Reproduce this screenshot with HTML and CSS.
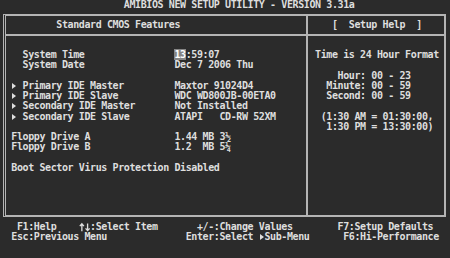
FILE: index.html
```html
<!DOCTYPE html>
<html lang="en">
<head>
  <meta charset="UTF-8" />
  <meta name="viewport" content="width=device-width, initial-scale=1" />
  <title>AMIBIOS Setup</title>
  <link rel="stylesheet" href="styles.css">
</head>
<body>
  <div class="screen">
    <div class="title">AMIBIOS NEW SETUP UTILITY - VERSION 3.31a</div>

    <div class="frame">
      <!-- Main settings pane -->
      <div class="pane main">
        <div class="head">Standard CMOS Features</div>
        <div class="body">
          <div class="group">
            <div class="item"><span></span><span class="label">System Time</span><span class="value"><span class="cursor">13</span>:59:07</span></div>
            <div class="item"><span></span><span class="label">System Date</span><span class="value">Dec 7 2006 Thu</span></div>
          </div>
          <div class="group">
            <div class="item"><span class="arrow"><i class="tri"></i></span><span class="label">Primary IDE Master</span><span class="value">Maxtor 91024D4</span></div>
            <div class="item"><span class="arrow"><i class="tri"></i></span><span class="label">Primary IDE Slave</span><span class="value">WDC WD800JB-00ETA0</span></div>
            <div class="item"><span class="arrow"><i class="tri"></i></span><span class="label">Secondary IDE Master</span><span class="value">Not Installed</span></div>
            <div class="item"><span class="arrow"><i class="tri"></i></span><span class="label">Secondary IDE Slave</span><span class="value">ATAPI   CD-RW 52XM</span></div>
          </div>
          <div class="group">
            <div class="item wide"><span class="label">Floppy Drive A</span><span class="value">1.44 MB 3½</span></div>
            <div class="item wide"><span class="label">Floppy Drive B</span><span class="value">1.2  MB 5¼</span></div>
          </div>
          <div class="group">
            <div class="item wide"><span class="label">Boot Sector Virus Protection</span><span class="value">Disabled</span></div>
          </div>
        </div>
      </div>

      <!-- Help pane -->
      <div class="pane help">
        <div class="head">[  Setup Help  ]</div>
        <div class="body">
          <div class="group">
            <div class="line">Time is 24 Hour Format</div>
          </div>
          <div class="group">
            <div class="line">    Hour: 00 - 23</div>
            <div class="line">  Minute: 00 - 59</div>
            <div class="line">  Second: 00 - 59</div>
          </div>
          <div class="group">
            <div class="line"> (1:30 AM = 01:30:00,</div>
            <div class="line">  1:30 PM = 13:30:00)</div>
          </div>
        </div>
      </div>
    </div>

    <div class="keys">
      <div class="line"> F1:Help    <svg class="ud" viewBox="0 0 11 10" width="11" height="10" aria-label="up down"><path d="M2.8 2v7M0.8 4l2-2.2 2 2.2M8.4 1.5v6.8M6.4 6.2l2 2.2 2-2.2" fill="none" stroke="#dedede" stroke-width="1.3"/></svg>:Select Item       +/-:Change Values        F7:Setup Defaults</div>
      <div class="line">Esc:Previous Menu              Enter:Select <span class="cell"><i class="tri"></i></span>Sub-Menu      F6:Hi-Performance</div>
    </div>
  </div>
</body>
</html>
```

FILE: styles.css
```css
/* Text-mode screen: 80 columns of 5.625px, rows of 10.25px */
* {
  box-sizing: border-box;
  margin: 0;
  padding: 0;
}

:root {
  --c: 5.625px;
  --row: 10.25px;
  --line: #b4b4b4;
}

body {
  background: #2b2b2b;
  color: #dedede;
  font-family: 'DejaVu Sans Mono', 'Liberation Mono', monospace;
  font-weight: bold;
  font-size: 10px;
  letter-spacing: -0.395px;
  line-height: var(--row);
}

.screen {
  width: 450px;
  height: 258px;
  overflow: hidden;
}

.line,
.item,
.title {
  white-space: pre;
  height: var(--row);
}

.title {
  padding-left: calc(var(--c) * 22);
}

/* Outer frame with the two panes */
.frame {
  margin-top: 3.75px;
  margin-left: 3px;
  width: 443px;
  border: 2px solid var(--line);
  border-left: 3px double var(--line);
  display: grid;
  grid-template-columns: 299.5px 1fr;
}

.head {
  padding: 4px 0 3.25px;
  border-bottom: 2px solid var(--line);
  white-space: pre;
  height: 19.5px;
}

.body {
  height: 179.5px;
  padding-top: 14.5px;
}

.group {
  margin-bottom: var(--row);
}

.main .head {
  padding-left: calc(var(--c) * 10 - 6px);
}

.main .body {
  padding-left: calc(var(--c) * 2 - 6px);
}

.item {
  display: grid;
  grid-template-columns: calc(var(--c) * 2) calc(var(--c) * 27) auto;
}

.item.wide {
  grid-template-columns: calc(var(--c) * 29) auto;
}

/* Small right-pointing triangle, as in the BIOS font */
.arrow,
.cell {
  display: inline-flex;
  align-items: center;
  height: var(--row);
  width: var(--c);
  vertical-align: top;
}

.tri {
  display: block;
  width: 0;
  height: 0;
  margin-left: 1px;
  border-left: 4px solid #dedede;
  border-top: 3px solid transparent;
  border-bottom: 3px solid transparent;
}

.ud {
  display: inline-block;
  width: calc(var(--c) * 2);
  height: var(--row);
  vertical-align: top;
}

.cursor {
  background: #858585;
  color: #fff;
}

.help {
  border-left: 2px solid var(--line);
}

.help .head {
  padding-left: calc(var(--c) * 59 - 307.5px);
}

.help .body {
  padding-left: calc(var(--c) * 56 - 307.5px);
}

/* Key legend under the frame */
.keys {
  margin-top: 4.5px;
  padding-left: calc(var(--c) * 2);
}
```
